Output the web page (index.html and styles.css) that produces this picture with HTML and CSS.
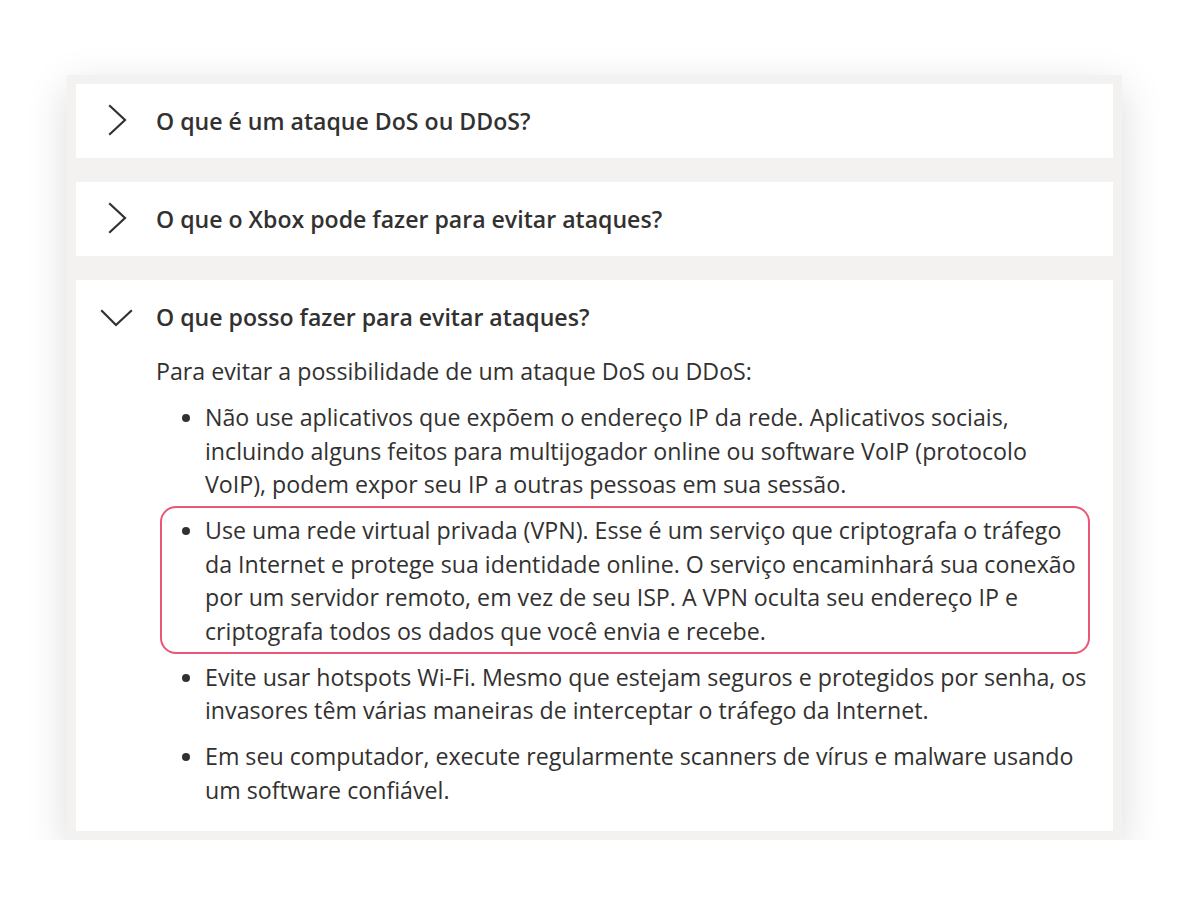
FILE: index.html
```html
<!DOCTYPE html>
<html lang="pt">
<head>
<meta charset="utf-8">
<link rel="stylesheet" href="styles.css">
</head>
<body>
<div class="frame">
  <section class="panel">
    <div class="head">
      <svg class="chev" viewBox="0 0 32 32" width="32" height="32"><polyline points="10,1 25,15 10,29" /></svg>
      <h2 class="title">O que é um ataque DoS ou DDoS?</h2>
    </div>
  </section>
  <section class="panel">
    <div class="head">
      <svg class="chev" viewBox="0 0 32 32" width="32" height="32"><polyline points="10,1 25,15 10,29" /></svg>
      <h2 class="title">O que o Xbox pode fazer para evitar ataques?</h2>
    </div>
  </section>
  <section class="panel open">
    <div class="head">
      <svg class="chev" viewBox="0 0 32 32" width="32" height="32"><polyline points="2,10 16,24 31,10" /></svg>
      <h2 class="title">O que posso fazer para evitar ataques?</h2>
    </div>
    <div class="body">
      <p class="intro">Para evitar a possibilidade de um ataque DoS ou DDoS:</p>
      <ul class="list">
        <li>Não use aplicativos que expõem o endereço IP da rede. Aplicativos sociais, incluindo alguns feitos para multijogador online ou software VoIP (protocolo VoIP), podem expor seu IP a outras pessoas em sua sessão.</li>
        <li class="marked">Use uma rede virtual privada (VPN). Esse é um serviço que criptografa o tráfego da Internet e protege sua identidade online. O serviço encaminhará sua conexão por um servidor remoto, em vez de seu ISP. A VPN oculta seu endereço IP e criptografa todos os dados que você envia e recebe.</li>
        <li>Evite usar hotspots Wi-Fi. Mesmo que estejam seguros e protegidos por senha, os invasores têm várias maneiras de interceptar o tráfego da Internet.</li>
        <li>Em seu computador, execute regularmente scanners de vírus e malware usando um software confiável.</li>
      </ul>
    </div>
  </section>
</div>
</body>
</html>
```
FILE: styles.css
```css
html, body {
  margin: 0;
  padding: 0;
  background: #ffffff;
}
body {
  font-family: "Open Sans", "Noto Sans", sans-serif;
  color: #323130;
}
.frame {
  margin: 75px 0 0 67px;
  width: 1037px;
  padding: 9px;
  background: #f3f2f1;
  display: flex;
  flex-direction: column;
  gap: 24px;
  box-shadow: 0 12px 40px rgba(0, 0, 0, 0.14);
}
.panel {
  background: #ffffff;
}
.head {
  height: 74px;
  display: flex;
  align-items: center;
  padding-left: 24px;
  gap: 24px;
}
.chev {
  flex: none;
  overflow: visible;
}
.chev polyline {
  fill: none;
  stroke: #323130;
  stroke-width: 2.2;
  stroke-linecap: square;
}
.title {
  margin: 0;
  font-size: 23.1px;
  font-weight: 600;
  line-height: 30px;
}
.body {
  padding: 0 23px 24px 80px;
  font-size: 23.2px;
  line-height: 33.5px;
}
.intro {
  margin: 1px 0 12.5px;
}
.list {
  margin: 0;
  padding-left: 49px;
  list-style: disc;
}
.list li {
  margin-bottom: 12.5px;
}
.list li:last-child {
  margin-bottom: 0;
}
.marked {
  position: relative;
}
.marked::after {
  content: "";
  position: absolute;
  top: -8px;
  bottom: -6px;
  left: -45px;
  right: 0;
  border: 2.5px solid #ea5774;
  border-radius: 16px;
  pointer-events: none;
}
```
